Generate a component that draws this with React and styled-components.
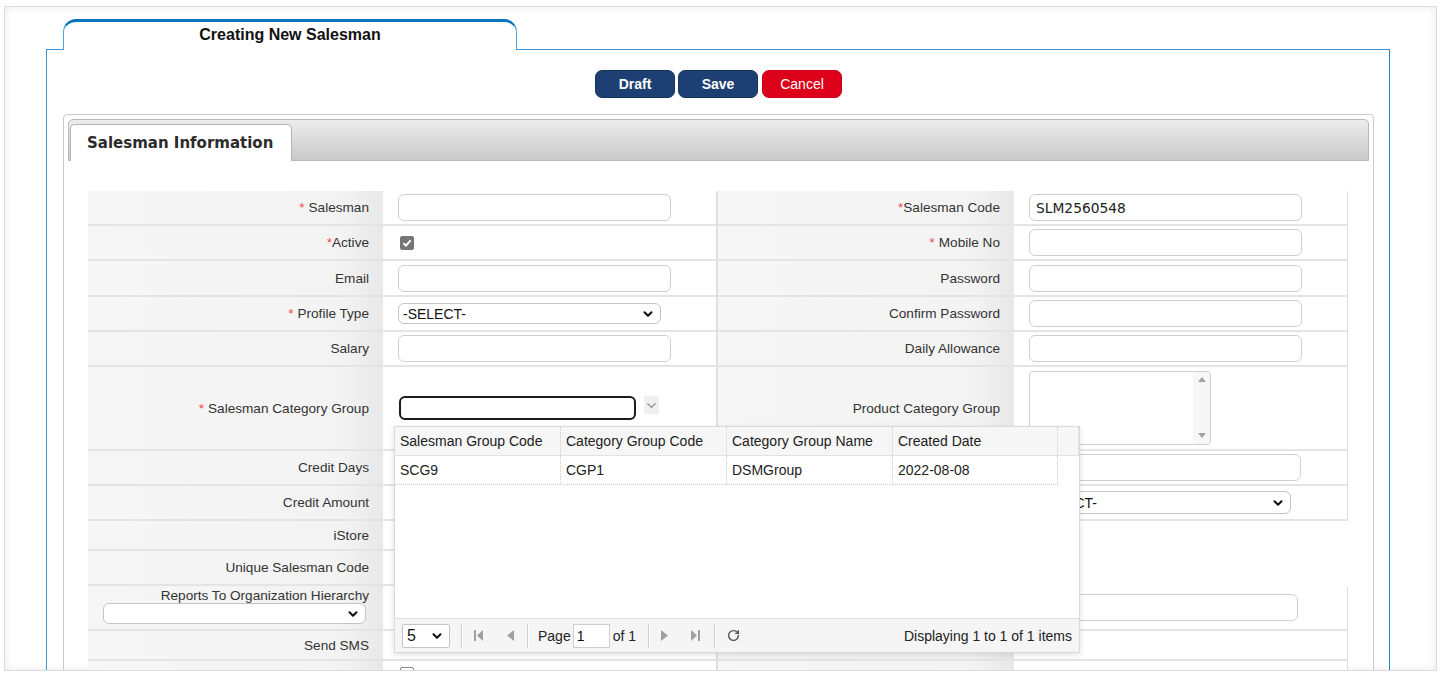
import React from "react";
import styled, { createGlobalStyle } from "styled-components";
import { ChevronDown, RotateCw } from "lucide-react";

const GlobalStyle = createGlobalStyle`
  * { box-sizing: border-box; }
  body {
    margin: 0;
    background: #ffffff;
    font-family: "Liberation Sans", Arial, sans-serif;
    color: #333;
  }
`;

const Page = styled.div`
  width: 1443px;
  height: 679px;
  padding: 6px 6px 0 4px;
  overflow: hidden;
`;

const Card = styled.div`
  height: 665px;
  background: #fff;
  border: 1px solid #dcdcdc;
  box-shadow: inset 0 0 9px rgba(0, 0, 0, 0.09);
  padding: 12px 0 0 41px;
  overflow: hidden;
`;

const Frame = styled.div`
  width: 1344px;
`;

const FrameTab = styled.div`
  width: 454px;
  height: 31px;
  margin-left: 17px;
  margin-bottom: -1px;
  position: relative;
  z-index: 1;
  background: #fff;
  border: 1px solid #4ea3dc;
  border-top: 3px solid #0b74bd;
  border-bottom: none;
  border-radius: 13px 13px 0 0;
  display: flex;
  align-items: center;
  justify-content: center;
  padding-bottom: 2px;
  font-weight: bold;
  font-size: 16px;
  color: #111;
`;

const FrameBody = styled.div`
  border: 1px solid #3d97d6;
  border-right-color: #1d86cf;
  border-bottom: none;
  height: 700px;
  padding: 20px 15px 0 16px;
`;

const ButtonRow = styled.div`
  display: flex;
  justify-content: center;
  gap: 3px;
  margin-bottom: 16px;
`;

const Button = styled.button`
  width: 80px;
  height: 28px;
  border-radius: 7px;
  border: 1px solid ${(p) => (p.$danger ? "#c8001a" : "#17345f")};
  background: ${(p) => (p.$danger ? "#dc0019" : "#1e3f73")};
  color: #fff;
  font-family: "Liberation Sans", Arial, sans-serif;
  font-weight: ${(p) => (p.$danger ? "normal" : "bold")};
  font-size: 14px;
  cursor: pointer;
  margin-right: ${(p) => (p.$gap ? "1px" : "0")};
`;

const Panel = styled.div`
  border: 1px solid #c9c9c9;
  border-radius: 4px;
  padding: 4px;
  height: 600px;
`;

const TabBar = styled.div`
  height: 42px;
  border: 1px solid #b9b9b9;
  border-radius: 5px 5px 0 0;
  background: linear-gradient(#ededed, #c9c9c9);
  display: flex;
  align-items: flex-end;
  padding-left: 1px;
`;

const Tab = styled.div`
  width: 222px;
  height: 37px;
  background: #fff;
  border: 1px solid #b5b5b5;
  border-bottom: none;
  border-radius: 5px 5px 0 0;
  display: flex;
  align-items: center;
  padding-left: 16px;
  font-family: "DejaVu Sans", Verdana, sans-serif;
  font-weight: bold;
  font-size: 15px;
  color: #2b2b2b;
  margin-bottom: -1px;
`;

const FormBody = styled.div`
  padding: 30px 0 0 20px;
`;

const Row = styled.div`
  display: grid;
  grid-template-columns: 295px 335px 296px 334px;
  height: ${(p) => p.$h}px;
`;

const Label = styled.div`
  display: flex;
  flex-direction: ${(p) => (p.$stacked ? "column" : "row")};
  align-items: ${(p) => (p.$stacked ? "flex-end" : "center")};
  justify-content: ${(p) => (p.$stacked ? "flex-start" : "flex-end")};
  padding: ${(p) => (p.$stacked ? "2px 14px 0 14px" : "0 14px 0 0")};
  background: linear-gradient(90deg, #f6f6f6 0%, #f3f3f3 86%, #e8e8e8 100%);
  border-bottom: 2px solid #e4e4e4;
  font-size: 13.6px;
  color: #333;
  white-space: nowrap;
  visibility: ${(p) => (p.$blank ? "hidden" : "visible")};
`;

const Star = styled.span`
  color: #ef4a4a;
  margin-right: ${(p) => (p.$tight ? "0" : "4px")};
`;

const Value = styled.div`
  display: flex;
  align-items: center;
  padding-left: 15px;
  background: #fff;
  border-bottom: ${(p) => (p.$blank ? "none" : "2px solid #e4e4e4")};
  border-right: ${(p) =>
    p.$blank ? "none" : p.$mid ? "2px solid #e0e0e0" : "1px solid #e0e0e0"};
  position: relative;
`;

const TextInput = styled.input`
  width: ${(p) => p.$w || 273}px;
  height: 27px;
  border: 1px solid #cfcfcf;
  border-radius: 6px;
  padding: 0 6px;
  font-family: "DejaVu Sans", Verdana, sans-serif;
  font-size: 13.8px;
  color: #222;
  background: #fff;
  outline: none;
`;

const SelectWrap = styled.div`
  position: relative;
  width: ${(p) => p.$w}px;
  height: ${(p) => p.$h || 21}px;
  margin-right: ${(p) => p.$mr || 0}px;
  svg {
    position: absolute;
    right: ${(p) => p.$r || 6}px;
    top: 50%;
    transform: translateY(-50%);
    pointer-events: none;
  }
`;

const Select = styled.select`
  appearance: none;
  width: 100%;
  height: 100%;
  border: 1px solid #c4c4c4;
  border-radius: ${(p) => p.$radius || 6}px;
  padding: 0 4px;
  font-family: "Liberation Sans", Arial, sans-serif;
  font-size: ${(p) => p.$fs || 14}px;
  color: #111;
  background: #fff;
`;

const Check = styled.span`
  width: 14px;
  height: 14px;
  border-radius: 2px;
  background: ${(p) => (p.$on ? "#767676" : "#fff")};
  border: 1px solid ${(p) => (p.$on ? "#767676" : "#8a8a8a")};
  display: inline-flex;
  align-items: center;
  justify-content: center;
  margin-left: 2px;
  align-self: ${(p) => (p.$top ? "flex-start" : "center")};
  margin-top: ${(p) => (p.$top ? "6px" : "0")};
`;

const TextArea = styled.div`
  width: 182px;
  height: 74px;
  border: 1px solid #cfcfcf;
  border-radius: 4px;
  background: #fff;
  display: flex;
  justify-content: flex-end;
`;

const ScrollTrack = styled.div`
  width: 17px;
  display: flex;
  flex-direction: column;
  justify-content: space-between;
  align-items: center;
  padding: 5px 0 6px;
  background: #f7f7f7;
  border-radius: 0 4px 4px 0;
`;

const Tri = styled.span`
  width: 0;
  height: 0;
  border-left: 4px solid transparent;
  border-right: 4px solid transparent;
  ${(p) =>
    p.$up ? "border-bottom: 5px solid #a3a3a3;" : "border-top: 5px solid #a3a3a3;"}
`;

const Combo = styled.div`
  position: relative;
  display: flex;
  align-items: flex-start;
  gap: 8px;
  margin-left: 1px;
`;

const ComboInput = styled.div`
  width: 237px;
  height: 24px;
  border: 2px solid #1b1b1b;
  border-radius: 6px;
  background: #fff;
`;

const ComboArrow = styled.span`
  width: 15px;
  height: 18px;
  background: #f0f0f0;
  display: flex;
  align-items: center;
  justify-content: center;
`;

const Popup = styled.div`
  position: absolute;
  left: -5px;
  top: 30px;
  width: 686px;
  height: 227px;
  background: #fff;
  border: 1px solid #dadada;
  box-shadow: 0 2px 6px rgba(0, 0, 0, 0.12);
  z-index: 5;
  display: flex;
  flex-direction: column;
`;

const GridHead = styled.div`
  display: grid;
  grid-template-columns: 166px 166px 166px 165px 1fr;
  height: 29px;
  background: #f6f6f6;
  border-bottom: 1px solid #e2e2e2;
`;

const GridRow = styled.div`
  display: grid;
  grid-template-columns: 166px 166px 166px 165px;
  height: 29px;
  width: 663px;
  border-bottom: 1px dotted #c8c8c8;
`;

const Cell = styled.div`
  display: flex;
  align-items: center;
  padding-left: 5px;
  font-size: 14px;
  color: #222;
  border-right: 1px dotted #cfcfcf;
  white-space: nowrap;
`;

const GridSpace = styled.div`
  flex: 1;
`;

const Pager = styled.div`
  height: 34px;
  background: #f5f5f5;
  border-top: 1px solid #e0e0e0;
  display: flex;
  align-items: center;
  padding: 0 7px;
  font-size: 14px;
  color: #222;
`;

const PagerSep = styled.span`
  width: 1px;
  height: 24px;
  background: #cfcfcf;
  box-shadow: 1px 0 0 #fff;
  margin: 0 ${(p) => p.$r}px 0 ${(p) => p.$l}px;
`;

const PagerBtn = styled.span`
  width: 22px;
  display: inline-flex;
  justify-content: center;
  margin-right: ${(p) => p.$mr || 0}px;
`;

const PageInput = styled.input`
  width: 37px;
  height: 24px;
  border: 1px solid #cfcfcf;
  margin: 0 3px 0 2px;
  padding: 0 3px;
  font-family: "Liberation Sans", Arial, sans-serif;
  font-size: 14px;
  color: #111;
`;

const PagerInfo = styled.span`
  margin-left: auto;
`;

const Icon = ({ kind }) => {
  const c = "#a0a0a0";
  if (kind === "first")
    return (
      <svg width="9" height="11" viewBox="0 0 9 11">
        <rect x="0" y="0" width="2" height="11" fill={c} />
        <polygon points="9,0 9,11 3,5.5" fill={c} />
      </svg>
    );
  if (kind === "prev")
    return (
      <svg width="7" height="11" viewBox="0 0 7 11">
        <polygon points="7,0 7,11 0,5.5" fill={c} />
      </svg>
    );
  if (kind === "next")
    return (
      <svg width="7" height="11" viewBox="0 0 7 11">
        <polygon points="0,0 0,11 7,5.5" fill={c} />
      </svg>
    );
  return (
    <svg width="9" height="11" viewBox="0 0 9 11">
      <polygon points="0,0 0,11 6,5.5" fill={c} />
      <rect x="7" y="0" width="2" height="11" fill={c} />
    </svg>
  );
};

const Tick = () => (
  <svg width="10" height="10" viewBox="0 0 10 10">
    <path d="M1.5 5.2 L4 7.6 L8.6 2.4" stroke="#fff" strokeWidth="2" fill="none" />
  </svg>
);

const Req = ({ children, tight }) => (
  <>
    <Star $tight={tight}>*</Star>
    {children}
  </>
);

function CategoryPopup() {
  return (
    <Popup>
      <GridHead>
        <Cell>Salesman Group Code</Cell>
        <Cell>Category Group Code</Cell>
        <Cell>Category Group Name</Cell>
        <Cell>Created Date</Cell>
        <Cell />
      </GridHead>
      <GridRow>
        <Cell>SCG9</Cell>
        <Cell>CGP1</Cell>
        <Cell>DSMGroup</Cell>
        <Cell>2022-08-08</Cell>
      </GridRow>
      <GridSpace />
      <Pager>
        <SelectWrap $w={48} $h={24} $r={6}>
          <Select $radius={2} $fs={16} defaultValue="5">
            <option>5</option>
            <option>10</option>
          </Select>
          <ChevronDown size={14} strokeWidth={3.5} color="#111" />
        </SelectWrap>
        <PagerSep $l={11} $r={5} />
        <PagerBtn $mr={10}>
          <Icon kind="first" />
        </PagerBtn>
        <PagerBtn>
          <Icon kind="prev" />
        </PagerBtn>
        <PagerSep $l={6} $r={10} />
        Page
        <PageInput defaultValue="1" />
        of 1
        <PagerSep $l={12} $r={4} />
        <PagerBtn $mr={9}>
          <Icon kind="next" />
        </PagerBtn>
        <PagerBtn>
          <Icon kind="last" />
        </PagerBtn>
        <PagerSep $l={8} $r={7} />
        <PagerBtn>
          <RotateCw size={13} strokeWidth={2.6} color="#555" />
        </PagerBtn>
        <PagerInfo>Displaying 1 to 1 of 1 items</PagerInfo>
      </Pager>
    </Popup>
  );
}

export default function App() {
  return (
    <>
      <GlobalStyle />
      <Page>
        <Card>
          <Frame>
            <FrameTab>Creating New Salesman</FrameTab>
            <FrameBody>
              <ButtonRow>
                <Button>Draft</Button>
                <Button $gap>Save</Button>
                <Button $danger>Cancel</Button>
              </ButtonRow>
              <Panel>
                <TabBar>
                  <Tab>Salesman Information</Tab>
                </TabBar>
                <FormBody>
                  <Row $h={35}>
                    <Label>
                      <Req>Salesman</Req>
                    </Label>
                    <Value $mid>
                      <TextInput />
                    </Value>
                    <Label>
                      <Req tight>Salesman Code</Req>
                    </Label>
                    <Value>
                      <TextInput defaultValue="SLM2560548" />
                    </Value>
                  </Row>
                  <Row $h={35}>
                    <Label>
                      <Req tight>Active</Req>
                    </Label>
                    <Value $mid>
                      <Check $on>
                        <Tick />
                      </Check>
                    </Value>
                    <Label>
                      <Req>Mobile No</Req>
                    </Label>
                    <Value>
                      <TextInput />
                    </Value>
                  </Row>
                  <Row $h={36}>
                    <Label>Email</Label>
                    <Value $mid>
                      <TextInput />
                    </Value>
                    <Label>Password</Label>
                    <Value>
                      <TextInput type="password" />
                    </Value>
                  </Row>
                  <Row $h={35}>
                    <Label>
                      <Req>Profile Type</Req>
                    </Label>
                    <Value $mid>
                      <SelectWrap $w={263} $h={21}>
                        <Select defaultValue="s">
                          <option value="s">-SELECT-</option>
                        </Select>
                        <ChevronDown size={14} strokeWidth={3.5} color="#111" />
                      </SelectWrap>
                    </Value>
                    <Label>Confirm Password</Label>
                    <Value>
                      <TextInput type="password" />
                    </Value>
                  </Row>
                  <Row $h={35}>
                    <Label>Salary</Label>
                    <Value $mid>
                      <TextInput />
                    </Value>
                    <Label>Daily Allowance</Label>
                    <Value>
                      <TextInput />
                    </Value>
                  </Row>
                  <Row $h={84}>
                    <Label>
                      <Req>Salesman Category Group</Req>
                    </Label>
                    <Value $mid>
                      <Combo>
                        <ComboInput />
                        <ComboArrow>
                          <ChevronDown size={15} strokeWidth={2} color="#8a8a8a" />
                        </ComboArrow>
                        <CategoryPopup />
                      </Combo>
                    </Value>
                    <Label>Product Category Group</Label>
                    <Value>
                      <TextArea>
                        <ScrollTrack>
                          <Tri $up />
                          <Tri />
                        </ScrollTrack>
                      </TextArea>
                    </Value>
                  </Row>
                  <Row $h={35}>
                    <Label>Credit Days</Label>
                    <Value $mid />
                    <Label />
                    <Value>
                      <TextInput $w={272} />
                    </Value>
                  </Row>
                  <Row $h={35}>
                    <Label>Credit Amount</Label>
                    <Value $mid />
                    <Label />
                    <Value>
                      <SelectWrap $w={262} $h={23}>
                        <Select defaultValue="s">
                          <option value="s">-SELECT-</option>
                        </Select>
                        <ChevronDown size={14} strokeWidth={3.5} color="#111" />
                      </SelectWrap>
                    </Value>
                  </Row>
                  <Row $h={30}>
                    <Label>iStore</Label>
                    <Value $mid />
                    <Label $blank />
                    <Value $blank />
                  </Row>
                  <Row $h={35}>
                    <Label>Unique Salesman Code</Label>
                    <Value $mid />
                    <Label $blank />
                    <Value $blank />
                  </Row>
                  <Row $h={45}>
                    <Label $stacked>
                      Reports To Organization Hierarchy
                      <SelectWrap $w={263} $h={21} $mr={3}>
                        <Select defaultValue="">
                          <option value=""></option>
                        </Select>
                        <ChevronDown size={14} strokeWidth={3.5} color="#111" />
                      </SelectWrap>
                    </Label>
                    <Value $mid />
                    <Label />
                    <Value>
                      <TextInput $w={269} />
                    </Value>
                  </Row>
                  <Row $h={30}>
                    <Label>Send SMS</Label>
                    <Value $mid />
                    <Label />
                    <Value />
                  </Row>
                  <Row $h={30}>
                    <Label />
                    <Value $mid>
                      <Check $top />
                    </Value>
                    <Label />
                    <Value />
                  </Row>
                </FormBody>
              </Panel>
            </FrameBody>
          </Frame>
        </Card>
      </Page>
    </>
  );
}
